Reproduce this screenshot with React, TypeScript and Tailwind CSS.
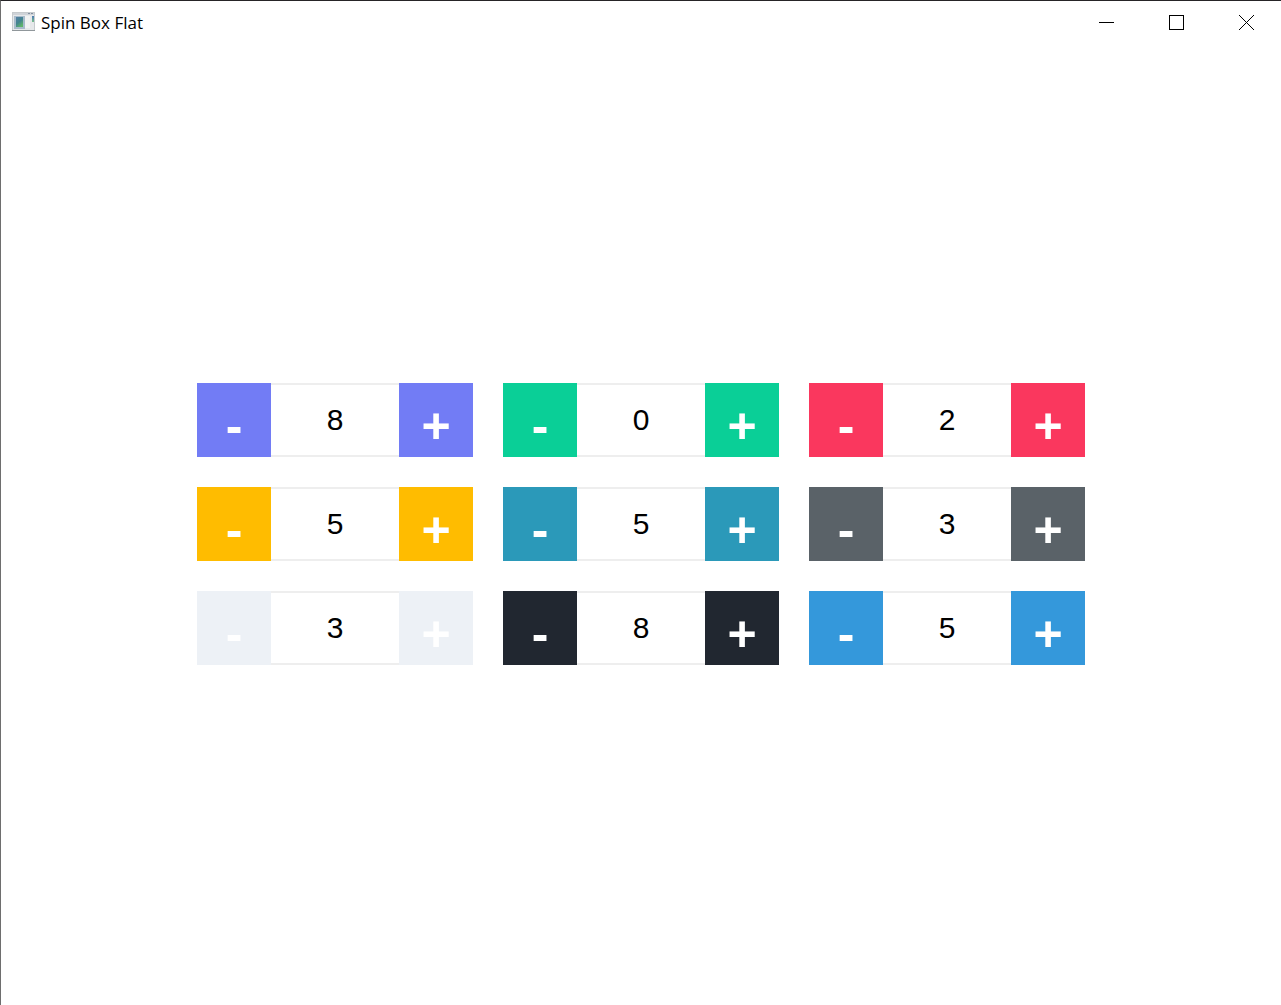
import { useState } from 'react';

type SpinBoxProps = { name: string; color: string; initial: number };

const boxes: SpinBoxProps[] = [
  { name: 'Violet', color: 'bg-[#727cf5]', initial: 8 },
  { name: 'Green', color: 'bg-[#0acf97]', initial: 0 },
  { name: 'Red', color: 'bg-[#fa375e]', initial: 2 },
  { name: 'Yellow', color: 'bg-[#ffbc00]', initial: 5 },
  { name: 'Teal', color: 'bg-[#2b99b9]', initial: 5 },
  { name: 'Gray', color: 'bg-[#5a6268]', initial: 3 },
  { name: 'Light', color: 'bg-[#edf1f6]', initial: 3 },
  { name: 'Dark', color: 'bg-[#212730]', initial: 8 },
  { name: 'Blue', color: 'bg-[#3498db]', initial: 5 },
];

function SpinBox({ name, color, initial }: SpinBoxProps) {
  const [value, setValue] = useState(initial);
  const button = `flex size-[74px] items-center justify-center pt-3 text-[50px] leading-none font-bold text-white ${color}`;
  return (
    <div className="flex" role="group" aria-label={name}>
      <button type="button" aria-label={`Decrease ${name}`} className={button} onClick={() => setValue(value - 1)}>
        -
      </button>
      <input
        type="text"
        inputMode="numeric"
        aria-label={`${name} value`}
        className="w-32 border-y-2 border-[#eeeeee] bg-white pb-0.5 text-center text-[30px] text-black outline-none"
        value={value}
        onChange={(e) => setValue(Number(e.target.value) || 0)}
      />
      <button type="button" aria-label={`Increase ${name}`} className={button} onClick={() => setValue(value + 1)}>
        +
      </button>
    </div>
  );
}

function AppIcon() {
  return (
    <svg width="24" height="20" viewBox="0 0 24 20" aria-hidden="true">
      <defs>
        <linearGradient id="pane" x1="0" y1="0" x2="0.6" y2="1">
          <stop offset="0" stopColor="#5580a6" />
          <stop offset="0.55" stopColor="#43848f" />
          <stop offset="1" stopColor="#5fb56a" />
        </linearGradient>
        <linearGradient id="side" x1="0" y1="0" x2="0" y2="1">
          <stop offset="0" stopColor="#4a78b4" />
          <stop offset="1" stopColor="#79c08b" />
        </linearGradient>
      </defs>
      <rect x="0.5" y="0.5" width="22" height="18" fill="#e6e8ea" stroke="#c6cacd" />
      <rect x="1" y="1" width="21" height="2" fill="#cfd3d8" />
      <rect x="16" y="1" width="2" height="1" fill="#8490a0" />
      <rect x="19" y="1" width="2" height="1" fill="#8490a0" />
      <rect x="2" y="4" width="11" height="13" fill="#a9bccb" />
      <rect x="4" y="5" width="7" height="10" fill="url(#pane)" />
      <rect x="13" y="4" width="5" height="12" fill="#f1f2f2" />
      <rect x="20" y="4" width="2" height="6" fill="url(#side)" />
      <rect x="0" y="18" width="23" height="1" fill="#90979b" />
    </svg>
  );
}

export default function App() {
  const control = 'flex h-full w-[70px] items-center justify-center text-black';
  return (
    <div className="flex min-h-screen flex-col border-t border-l border-t-[#262427] border-l-[#6e6e6e] bg-white font-['Liberation_Sans',Arial,sans-serif]">
      <header className="flex h-[42px] items-center justify-between">
        <div className="flex items-center gap-[5px] pl-[11px]">
          <AppIcon />
          <h1 className="pt-0.5 font-['Open_Sans','Noto_Sans',sans-serif] text-[17px] leading-6 text-black">Spin Box Flat</h1>
        </div>
        <div className="flex h-full">
          <button type="button" aria-label="Minimize" className={control}>
            <svg width="15" height="15" shapeRendering="crispEdges">
              <path d="M0 7.5H15" stroke="currentColor" />
            </svg>
          </button>
          <button type="button" aria-label="Maximize" className={control}>
            <svg width="15" height="15" shapeRendering="crispEdges">
              <rect x="0.5" y="0.5" width="14" height="14" fill="none" stroke="currentColor" />
            </svg>
          </button>
          <button type="button" aria-label="Close" className={control}>
            <svg width="15" height="15">
              <path d="M0 0L15 15M15 0L0 15" stroke="currentColor" />
            </svg>
          </button>
        </div>
      </header>
      <main className="flex flex-1 items-center justify-center">
        <div className="grid grid-cols-3 gap-[30px]">
          {boxes.map((box) => (
            <SpinBox key={box.name} {...box} />
          ))}
        </div>
      </main>
    </div>
  );
}
